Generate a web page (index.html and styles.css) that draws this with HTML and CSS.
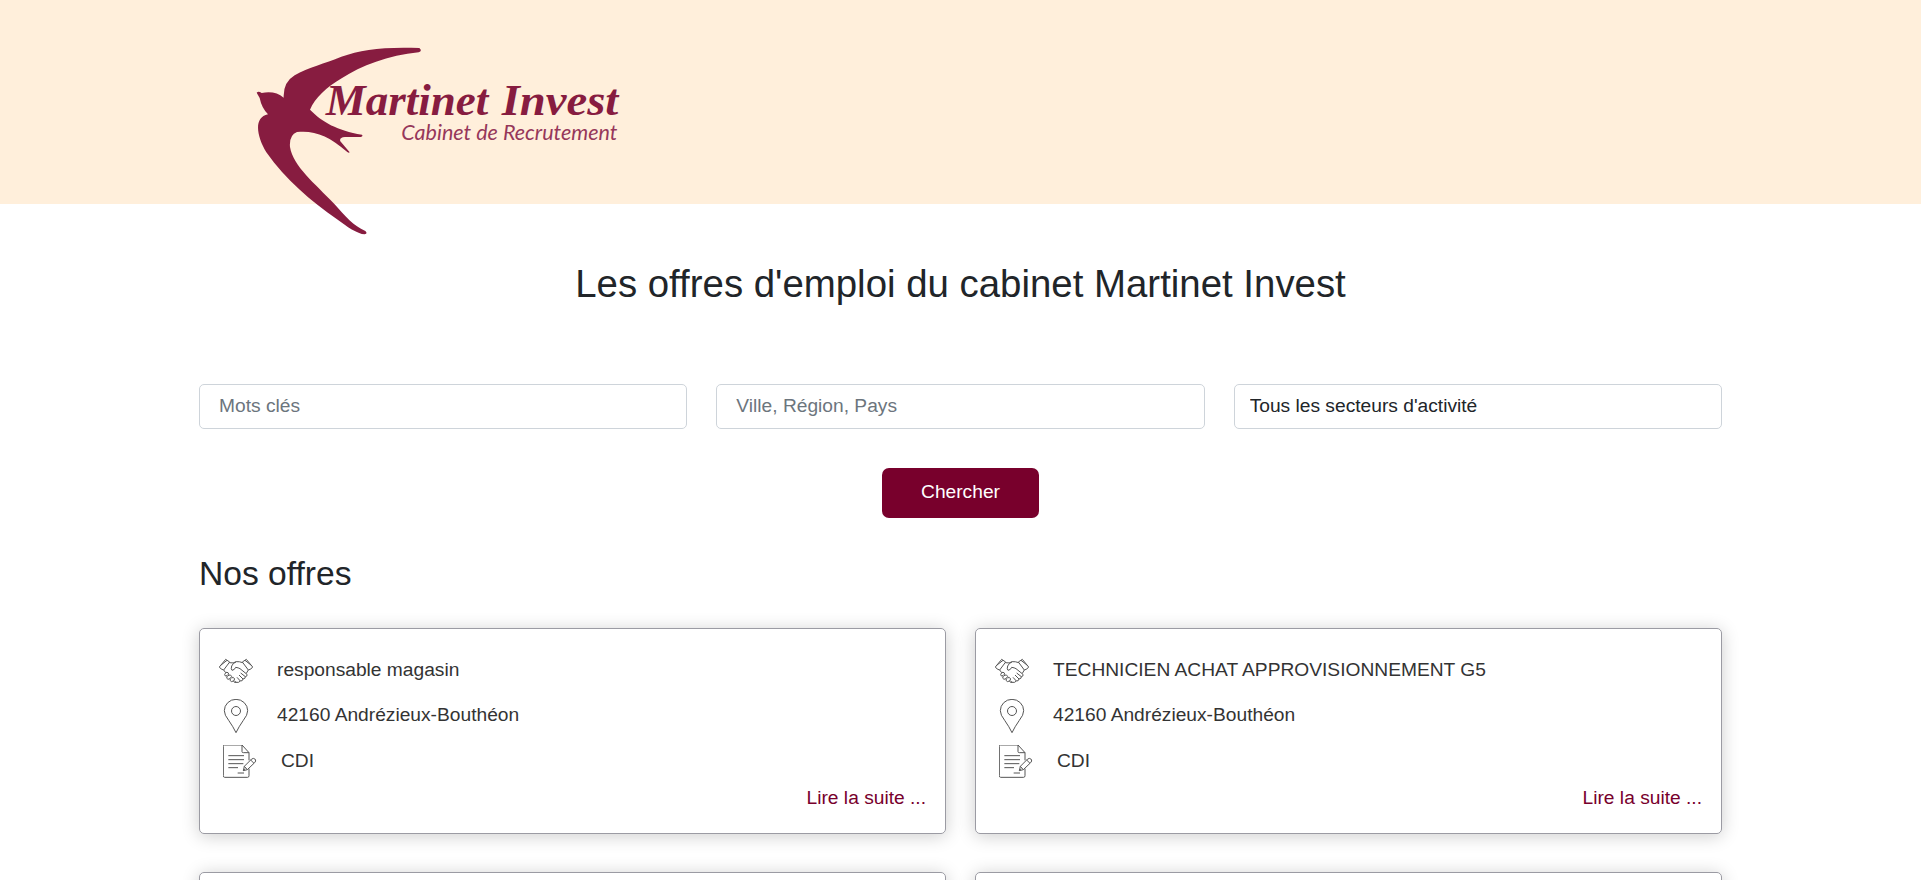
FILE: index.html
```html
<!DOCTYPE html>
<html lang="fr">
<head>
<meta charset="utf-8">
<title>Martinet Invest</title>
<link rel="stylesheet" href="styles.css">
</head>
<body>
<svg class="sprite" aria-hidden="true">
  <symbol id="hands" viewBox="0 14 102 102">
    <path d="M1 53 20 30 32 38 14 62Q6 61 1 53ZM5 48 24 33M101 53 82 30 70 38 88 62Q96 61 101 53ZM97 48 78 33M31 40Q43 43 52 37Q61 36 71 40M52 37Q41 42 38 50Q35 60 39 63Q47 62 50 54Q58 55 63 58L84 75Q86 81 79 82L65 71M79 82Q80 88 72 89L60 77M72 89Q71 96 64 95L54 84M64 95Q59 101 52 99L46 95M14 62 20 70M88 62 82 72M21 69Q14 76 19 80Q24 81 29 74Q29 68 21 69ZM25 80Q20 88 27 90Q34 90 38 81Q35 73 27 79M34 88Q31 95 38 97Q45 96 47 89Q44 81 37 86M43 96Q46 101 53 99"/>
  </symbol>
  <symbol id="pin" viewBox="0 0 102 102">
    <path d="M51 101Q43 84 29 64Q16 48 16 35A35 34 0 0 1 86 35Q86 48 73 64Q59 84 51 101Z"/><circle cx="51" cy="36" r="13.5"/>
  </symbol>
  <symbol id="contract" viewBox="1 2 102 102">
    <path d="M79 48V25L58 2H5Q2 2 2 6V94Q2 99 6 99H75Q79 99 79 94V73M58 2V22Q58 25 62 25H79M17 34H64M17 46H64M17 58H62M17 70H46M45 86H64M62 79 65 66 87 44Q92 40 98 45Q101 50 96 55L74 76ZM65 66 74 76M84 47 94 57M62 79 67 73"/>
  </symbol>
</svg>

<header class="banner">
  <svg class="logo" viewBox="0 0 1200 660" role="img" aria-label="Martinet Invest">
    <path class="bird" d="M50 188Q55 182 65 189Q105 181 131 203Q129 157 164 136C205 112 254 101 304 80C365 59 430 50 538 54Q548 62 536 67C445 75 363 108 305 145C259 172 225 204 210 239C248 277 291 301 366 314Q370 319 362 321L315 321Q297 322 301 334L329 367Q326 371 319 364C268 318 222 300 171 306Q147 315 150 351C160 410 225 460 281 520C317 560 340 588 376 603Q384 611 374 613C352 612 321 590 290 567C215 515 136 449 79 367C51 321 39 263 84 253Q65 234 59 204Z"/>
    <text class="logo-name" x="257" y="256" textLength="488" lengthAdjust="spacingAndGlyphs">Martinet</text>
    <text class="logo-name" x="785" y="256" textLength="350" lengthAdjust="spacingAndGlyphs">Invest</text>
    <text class="logo-sub" x="484" y="329" textLength="648" lengthAdjust="spacingAndGlyphs">Cabinet de Recrutement</text>
  </svg>
</header>

<main class="page">
  <h1 class="title">Les offres d'emploi du cabinet Martinet Invest</h1>
  <form class="search">
    <div class="fields">
      <input class="field" type="text" placeholder="Mots clés">
      <input class="field" type="text" placeholder="Ville, Région, Pays">
      <select class="field field-select"><option>Tous les secteurs d'activité</option></select>
    </div>
    <button class="submit" type="button">Chercher</button>
  </form>

  <h2 class="subtitle">Nos offres</h2>
  <section class="offers">
    <article class="card">
      <div class="row row-job"><svg class="icon"><use href="#hands"/></svg><span>responsable magasin</span></div>
      <div class="row"><svg class="icon"><use href="#pin"/></svg><span>42160 Andrézieux-Bouthéon</span></div>
      <div class="row row-contract"><svg class="icon"><use href="#contract"/></svg><span>CDI</span></div>
      <a class="more">Lire la suite ...</a>
    </article>
    <article class="card">
      <div class="row row-job"><svg class="icon"><use href="#hands"/></svg><span>TECHNICIEN ACHAT APPROVISIONNEMENT G5</span></div>
      <div class="row"><svg class="icon"><use href="#pin"/></svg><span>42160 Andrézieux-Bouthéon</span></div>
      <div class="row row-contract"><svg class="icon"><use href="#contract"/></svg><span>CDI</span></div>
      <a class="more">Lire la suite ...</a>
    </article>
    <article class="card"></article>
    <article class="card"></article>
  </section>
</main>
</body>
</html>
```
FILE: styles.css
```css
* { box-sizing: border-box; }
html { font-size: 19.2px; }
body {
  margin: 0;
  height: 880px;
  overflow: hidden;
  background: #fff;
  color: #212529;
  font-family: "Liberation Sans", Arial, sans-serif;
  line-height: 1.5;
}
.sprite { display: none; }
.banner {
  height: 204px;
  padding: 30px 0 0 240px;
  background: #ffefdb;
}
.logo {
  display: block;
  width: 400px;
  height: 220px;
  overflow: visible;
  fill: #871c40;
}
.logo-name {
  font: italic bold 132px "Liberation Serif", serif;
}
.logo-sub {
  font: italic 66px Lato, sans-serif;
  fill: #96375a;
}
.page {
  width: 1523px;
  margin: 0 auto;
}
.title {
  margin: 57px 0 0;
  font-size: 2rem;
  font-weight: 400;
  line-height: 46px;
  text-align: center;
}
.search {
  display: flex;
  flex-direction: column;
  align-items: center;
  margin-top: 77px;
}
.fields {
  display: grid;
  grid-template-columns: repeat(3, 1fr);
  gap: 29px;
  width: 100%;
}
.field {
  width: 100%;
  height: 45px;
  margin: 0;
  padding: 0 19px 2px;
  border: 1px solid #ced4da;
  border-radius: 5px;
  background: #fff;
  color: #212529;
  font: inherit;
}
.field::placeholder { color: #6c757d; opacity: 1; }
.field-select {
  appearance: none;
  padding: 0 15px;
}
.submit {
  width: 157px;
  height: 50px;
  margin-top: 39px;
  padding: 0 0 1px;
  border: 0;
  border-radius: 7px;
  background: #78002c;
  color: #fff;
  font: inherit;
}
.subtitle {
  margin: 36px 0 0;
  font-size: 1.75rem;
  font-weight: 400;
  line-height: 40px;
}
.offers {
  display: grid;
  grid-template-columns: 1fr 1fr;
  gap: 38px 29px;
  margin-top: 34px;
}
.card {
  display: flex;
  flex-direction: column;
  height: 206px;
  padding: 19px;
  border: 1px solid #9b9ba3;
  border-radius: 5px;
  box-shadow: 0 2px 18px rgba(0, 0, 0, .2);
  color: #333;
}
.row {
  display: flex;
  align-items: center;
  gap: 24px;
  height: 45.5px;
}
.row span { padding-bottom: 2px; }
.row-job span,
.row-contract span { padding-bottom: 0; }
.row-contract { padding-left: 4px; }
.icon {
  width: 34px;
  height: 34px;
  fill: none;
  stroke: #555;
  stroke-width: 3;
  stroke-linejoin: round;
}
.more {
  align-self: flex-end;
  margin-top: -2px;
  color: #78002c;
  line-height: 29px;
}
```
